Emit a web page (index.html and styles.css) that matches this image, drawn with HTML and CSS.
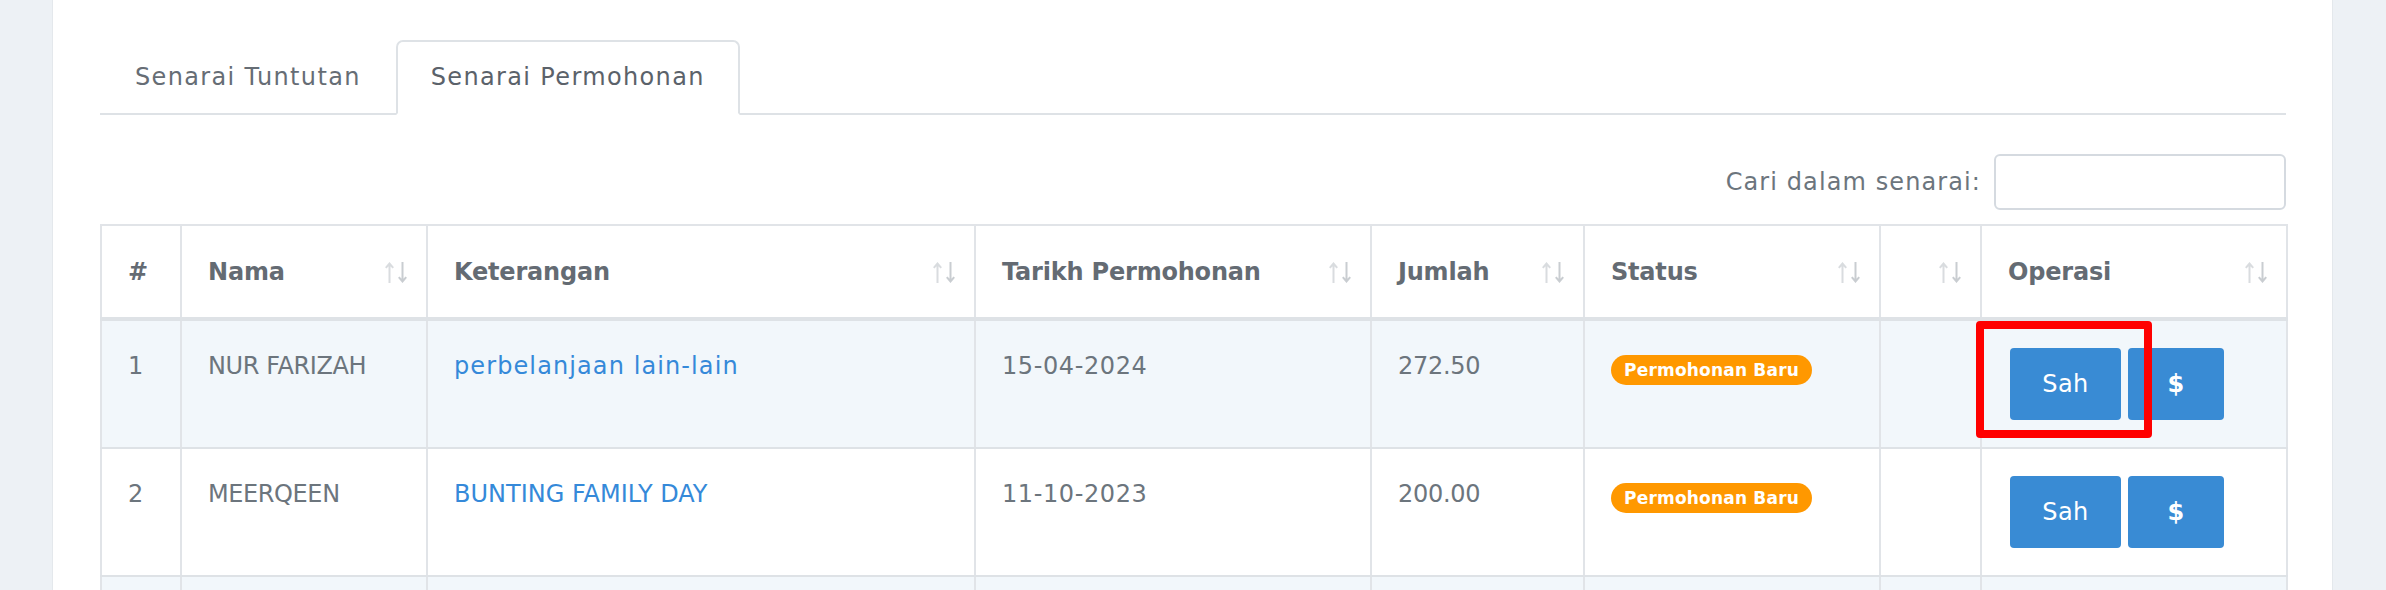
FILE: index.html
```html
<!DOCTYPE html>
<html lang="ms">
<head>
<meta charset="utf-8">
<title>Senarai Permohonan</title>
<link rel="stylesheet" href="styles.css">
</head>
<body>
<div class="card">
  <ul class="tabs">
    <li class="tab"><a href="#">Senarai Tuntutan</a></li>
    <li class="tab active"><a href="#">Senarai Permohonan</a></li>
  </ul>

  <div class="search-row">
    <label class="search-label" for="cari">Cari dalam senarai:</label>
    <input id="cari" class="search-input" type="search">
  </div>

  <table class="data">
    <colgroup>
      <col class="c-no"><col class="c-nama"><col class="c-ket"><col class="c-tarikh">
      <col class="c-jumlah"><col class="c-status"><col class="c-blank"><col class="c-op">
    </colgroup>
    <thead>
      <tr>
        <th>#</th>
        <th class="sortable">Nama<svg class="sort" viewBox="0 0 24 21"><path class="up" d="M4.5 21V2M0.8 5.8L4.5 1.5L8.2 5.8"/><path class="down" d="M17.5 0V19M13.8 15.2L17.5 19.5L21.2 15.2"/></svg></th>
        <th class="sortable">Keterangan<svg class="sort" viewBox="0 0 24 21"><path class="up" d="M4.5 21V2M0.8 5.8L4.5 1.5L8.2 5.8"/><path class="down" d="M17.5 0V19M13.8 15.2L17.5 19.5L21.2 15.2"/></svg></th>
        <th class="sortable">Tarikh Permohonan<svg class="sort" viewBox="0 0 24 21"><path class="up" d="M4.5 21V2M0.8 5.8L4.5 1.5L8.2 5.8"/><path class="down" d="M17.5 0V19M13.8 15.2L17.5 19.5L21.2 15.2"/></svg></th>
        <th class="sortable">Jumlah<svg class="sort" viewBox="0 0 24 21"><path class="up" d="M4.5 21V2M0.8 5.8L4.5 1.5L8.2 5.8"/><path class="down" d="M17.5 0V19M13.8 15.2L17.5 19.5L21.2 15.2"/></svg></th>
        <th class="sortable">Status<svg class="sort" viewBox="0 0 24 21"><path class="up" d="M4.5 21V2M0.8 5.8L4.5 1.5L8.2 5.8"/><path class="down" d="M17.5 0V19M13.8 15.2L17.5 19.5L21.2 15.2"/></svg></th>
        <th class="sortable"><svg class="sort" viewBox="0 0 24 21"><path class="up" d="M4.5 21V2M0.8 5.8L4.5 1.5L8.2 5.8"/><path class="down" d="M17.5 0V19M13.8 15.2L17.5 19.5L21.2 15.2"/></svg></th>
        <th class="sortable">Operasi<svg class="sort" viewBox="0 0 24 21"><path class="up" d="M4.5 21V2M0.8 5.8L4.5 1.5L8.2 5.8"/><path class="down" d="M17.5 0V19M13.8 15.2L17.5 19.5L21.2 15.2"/></svg></th>
      </tr>
    </thead>
    <tbody>
      <tr class="odd">
        <td>1</td>
        <td class="caps">NUR FARIZAH</td>
        <td><a class="link" href="#">perbelanjaan lain-lain</a></td>
        <td class="num">15-04-2024</td>
        <td class="amt">272.50</td>
        <td><span class="badge">Permohonan Baru</span></td>
        <td></td>
        <td>
          <div class="ops">
            <button class="btn btn-sah" type="button">Sah</button>
            <button class="btn btn-pay" type="button">$</button>
            <span class="highlight"></span>
          </div>
        </td>
      </tr>
      <tr>
        <td>2</td>
        <td class="caps">MEERQEEN</td>
        <td><a class="link caps-link" href="#">BUNTING FAMILY DAY</a></td>
        <td class="num">11-10-2023</td>
        <td class="amt">200.00</td>
        <td><span class="badge">Permohonan Baru</span></td>
        <td></td>
        <td>
          <div class="ops">
            <button class="btn btn-sah" type="button">Sah</button>
            <button class="btn btn-pay" type="button">$</button>
          </div>
        </td>
      </tr>
      <tr class="odd filler">
        <td></td><td></td><td></td><td></td><td></td><td></td><td></td><td></td>
      </tr>
    </tbody>
  </table>
</div>
</body>
</html>
```

FILE: styles.css
```css
* { box-sizing: border-box; }

html, body {
  margin: 0;
  height: 100%;
  overflow: hidden;
}

body {
  background: #edf1f5;
  font-family: "DejaVu Sans", "Liberation Sans", sans-serif;
  font-size: 24px;
  line-height: 36px;
  letter-spacing: 1.1px;
  color: #6c757d;
}

.card {
  margin: 0 53px 0 52px;
  height: 100%;
  background: #ffffff;
  border-left: 1px solid #e4e8ec;
  border-right: 1px solid #e4e8ec;
  padding: 40px 46px 0 47px;
}

/* Tabs */
.tabs {
  display: flex;
  list-style: none;
  margin: 0;
  padding: 0;
  border-bottom: 2px solid #dee2e6;
}

.tab {
  margin-bottom: -2px;
}

.tab a {
  display: block;
  padding: 18px 33px 18px 33px;
  line-height: 35px;
  letter-spacing: 1.35px;
  border: 2px solid transparent;
  border-radius: 7px 7px 0 0;
  color: #666d75;
  text-decoration: none;
}

.tab.active a {
  background: #ffffff;
  border-color: #dee2e6 #dee2e6 #ffffff;
  color: #5b626a;
}

/* Search */
.search-row {
  display: flex;
  justify-content: flex-end;
  align-items: center;
  gap: 13px;
  margin-top: 39px;
}

.search-label {
  color: #6c757d;
}

.search-input {
  width: 292px;
  height: 56px;
  border: 2px solid #d5dae0;
  border-radius: 6px;
  background: #fff;
  font: inherit;
  padding: 0 12px;
  outline: none;
}

/* Table */
.data {
  width: 100%;
  margin-top: 14px;
  border-collapse: collapse;
  table-layout: fixed;
  border: 2px solid #dee2e6;
}

.c-no { width: 80px; }
.c-nama { width: 246px; }
.c-ket { width: 548px; }
.c-tarikh { width: 396px; }
.c-jumlah { width: 213px; }
.c-status { width: 296px; }
.c-blank { width: 101px; }
.c-op { width: 306px; }

.data th,
.data td {
  border: 2px solid #e1e4e8;
  padding: 27px 28px 27px 26px;
  text-align: left;
  vertical-align: top;
  white-space: nowrap;
}

.data th {
  position: relative;
  font-weight: 700;
  letter-spacing: -0.2px;
  color: #646b73;
  padding-top: 28px;
  padding-bottom: 27px;
  border-bottom: 4px solid #dee2e6;
}

.data tbody tr td {
  border-top: 2px solid #dee2e6;
  border-bottom: 2px solid #dee2e6;
}

.data tr.odd td {
  background: #f2f7fb;
}

.data tr.filler td {
  height: 126px;
}

.cell-text {
  display: block;
}

.caps {
  letter-spacing: -0.4px;
}

.num {
  letter-spacing: 0.6px;
}

.amt {
  letter-spacing: -0.3px;
}

.sort {
  position: absolute;
  right: 17px;
  top: 36px;
  width: 24px;
  height: 21px;
  fill: none;
  stroke-width: 2;
}

.sort .up { stroke: #d9dcdf; }
.sort .down { stroke: #c9cdd1; }

.link {
  color: #3589d9;
  text-decoration: none;
}

.caps-link {
  letter-spacing: 0;
}

.badge {
  display: inline-block;
  margin-top: 7px;
  height: 30px;
  padding: 0 13px;
  border-radius: 15px;
  background: #ff9800;
  color: #ffffff;
  font-size: 17px;
  font-weight: 700;
  letter-spacing: 0.2px;
  line-height: 30px;
  vertical-align: top;
}

.ops {
  position: relative;
  display: flex;
  gap: 7px;
  margin-left: 2px;
}

.btn {
  height: 72px;
  border: none;
  border-radius: 4px;
  background: #398bd4;
  color: #ffffff;
  font-family: inherit;
  font-size: 24px;
  letter-spacing: 0.5px;
  padding: 0;
}

.btn-sah { width: 111px; }

.btn-pay {
  width: 96px;
  font-weight: 700;
}

.highlight {
  position: absolute;
  left: -34px;
  top: -27px;
  width: 176px;
  height: 117px;
  border: 8px solid #ff0000;
  border-radius: 4px;
  pointer-events: none;
}
```
